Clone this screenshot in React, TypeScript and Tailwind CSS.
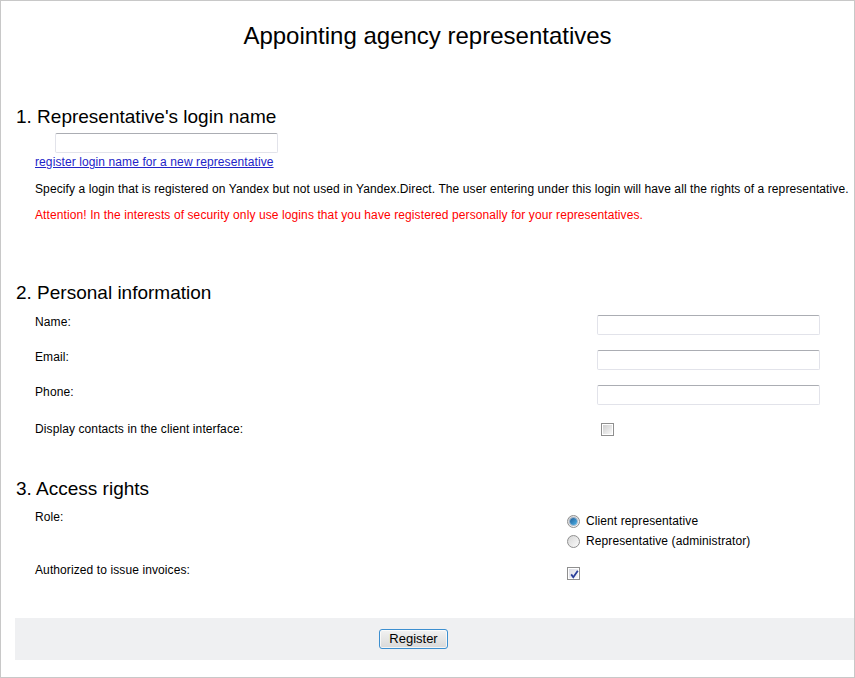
import React from 'react'

const font = { fontFamily: '"Liberation Sans", Arial, sans-serif' }

function TextInput() {
  return (
    <input
      type="text"
      className="block h-[20px] w-[223px] rounded-[2px] border border-[#e2e3ea] border-t-[#abadb3] bg-white px-1 text-[12px] outline-none"
    />
  )
}

function Checkbox({ checked = false }: { checked?: boolean }) {
  return (
    <span className="relative block h-[13px] w-[13px] border border-[#8f8f8f] bg-white p-[1px]">
      <span
        className={
          checked
            ? 'block h-full w-full bg-gradient-to-br from-[#dcdde6] to-[#f6f6f8]'
            : 'block h-full w-full bg-gradient-to-br from-[#cfcfcf] to-[#f8f8f8]'
        }
      />
      {checked && (
        <svg
          viewBox="0 0 11 11"
          className="absolute left-[1px] top-[1px] h-[11px] w-[11px]"
        >
          <path
            d="M2.2 5.4 L4.3 8.2 L8.8 1.8"
            fill="none"
            stroke="#2a3f9a"
            strokeWidth="1.8"
          />
        </svg>
      )}
    </span>
  )
}

function Radio({ checked = false }: { checked?: boolean }) {
  return (
    <span className="flex h-[13px] w-[13px] items-center justify-center rounded-full border border-[#8f8f8f] bg-gradient-to-br from-[#d6d6d6] to-[#fbfbfb]">
      {checked && (
        <span className="block h-[7px] w-[7px] rounded-full bg-gradient-to-br from-[#1f5f9a] to-[#4fb3e8] shadow-[0_0_0_1px_rgba(25,80,140,0.35)]" />
      )}
    </span>
  )
}

function Heading({ children }: { children: React.ReactNode }) {
  return (
    <h2 className="pl-[15px] text-[19px] leading-[22px] tracking-normal text-black">
      {children}
    </h2>
  )
}

export default function App() {
  return (
    <div
      style={font}
      className="flex h-[678px] w-[855px] flex-col border border-[#c8c8c8] bg-white pt-[21px] text-[12px] leading-[15px] tracking-[0.1px] text-black"
    >
      <h1 className="text-center text-[24px] leading-[28px] tracking-normal">
        Appointing agency representatives
      </h1>

      <div className="mt-[56px]">
        <Heading>1. Representative's login name</Heading>
        <div className="pl-[34px]">
          <div className="ml-[20px] mt-[5px]">
            <TextInput />
          </div>
          <a
            href="#"
            className="mt-[2px] block w-fit text-[#2323c8] underline"
          >
            register login name for a new representative
          </a>
          <p className="mt-[12px] whitespace-nowrap">
            Specify a login that is registered on Yandex but not used in
            Yandex.Direct. The user entering under this login will have all the
            rights of a representative.
          </p>
          <p className="mt-[11px] whitespace-nowrap text-[#ff0000]">
            Attention! In the interests of security only use logins that you
            have registered personally for your representatives.
          </p>
        </div>
      </div>

      <div className="mt-[59px]">
        <Heading>2. Personal information</Heading>
        <div className="mt-[11px] pl-[34px]">
          {['Name:', 'Email:', 'Phone:'].map((label) => (
            <div key={label} className="flex h-[35px] items-start">
              <span className="w-[562px]">{label}</span>
              <TextInput />
            </div>
          ))}
          <div className="flex h-[35px] items-start">
            <span className="w-[562px] pt-[2px]">
              Display contacts in the client interface:
            </span>
            <span className="ml-[4px] mt-[3px]">
              <Checkbox />
            </span>
          </div>
        </div>
      </div>

      <div className="mt-[23px]">
        <Heading>3. Access rights</Heading>
        <div className="mt-[10px] pl-[34px]">
          <div className="flex items-start">
            <span className="w-[532px]">Role:</span>
            <div className="mt-[1px] flex flex-col leading-[20px]">
              <label className="flex items-center gap-[6px]">
                <Radio checked />
                <span>Client representative</span>
              </label>
              <label className="flex items-center gap-[6px]">
                <Radio />
                <span>Representative (administrator)</span>
              </label>
            </div>
          </div>
          <div className="mt-[12px] flex h-[16px] items-start">
            <span className="w-[532px]">Authorized to issue invoices:</span>
            <span className="mt-[4px]">
              <Checkbox checked />
            </span>
          </div>
        </div>
      </div>

      <div className="ml-[14px] mt-[39px] h-[42px] bg-[#eff0f2] pt-[11px]">
        <button
          type="button"
          className="ml-[364px] block h-[20px] w-[69px] rounded-[3px] border border-[#3c8fd0] bg-gradient-to-b from-[#f2f2f2] to-[#d9d9d9] text-[13px] leading-[16px] tracking-normal text-black shadow-[inset_0_0_0_1px_rgba(255,255,255,0.7)]"
        >
          Register
        </button>
      </div>
    </div>
  )
}
